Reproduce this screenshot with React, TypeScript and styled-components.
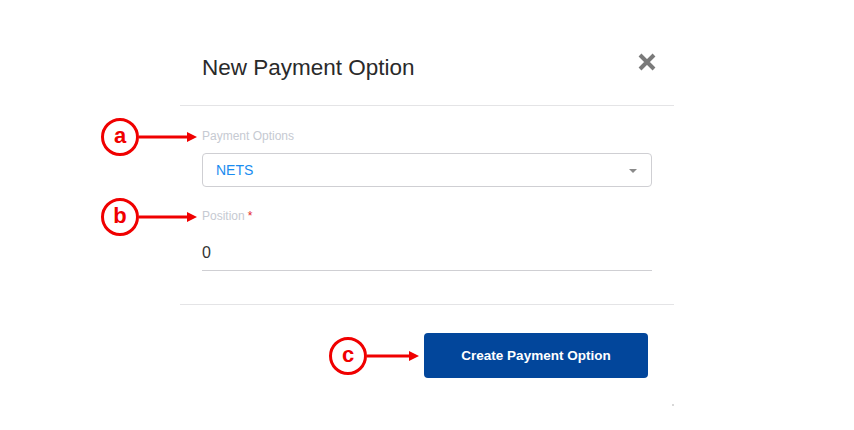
import React from 'react';
import styled, { createGlobalStyle } from 'styled-components';

const GlobalStyle = createGlobalStyle`
    html, body {
        margin: 0;
        padding: 0;
        background: #ffffff;
        font-family: "Liberation Sans", Arial, sans-serif;
    }
`;

const Page = styled.div`
    position: relative;
    width: 854px;
    height: 430px;
    overflow: hidden;
    background: #ffffff;
`;

const Modal = styled.div`
    margin: 30px 0 0 180px;
    width: 494px;
    display: flex;
    flex-direction: column;
`;

const Header = styled.div`
    height: 75px;
    display: flex;
    align-items: center;
    justify-content: space-between;
    padding: 0 15px 0 22px;
    border-bottom: 1px solid #e4e4e6;
`;

const Title = styled.h1`
    margin: 0;
    font-size: 22.5px;
    font-weight: 400;
    color: #2a2a2a;
    line-height: 30px;
`;

const Close = styled.button`
    border: none;
    background: none;
    padding: 0;
    width: 24px;
    height: 24px;
    margin-top: -12px;
    display: flex;
    align-items: center;
    justify-content: center;
    cursor: pointer;
`;

const Body = styled.div`
    padding: 22px 22px 33px;
    display: flex;
    flex-direction: column;
    border-bottom: 1px solid #e4e4e6;
`;

const Label = styled.label`
    font-size: 12px;
    line-height: 16px;
    color: #c6cad2;
`;

const Required = styled.span`
    color: #e3262b;
    margin-left: 3px;
`;

const Select = styled.div`
    margin: 9px 0 21px;
    height: 34px;
    box-sizing: border-box;
    border: 1px solid #cfcfd3;
    border-radius: 4px;
    display: flex;
    align-items: center;
    justify-content: space-between;
    padding: 0 14px 0 13px;
    font-size: 14px;
    color: #1a8cf0;
`;

const Caret = styled.span`
    width: 0;
    height: 0;
    border-left: 4px solid transparent;
    border-right: 4px solid transparent;
    border-top: 4px solid #8a8a8a;
    margin-top: 2px;
`;

const Input = styled.div`
    margin-top: 12px;
    height: 35px;
    box-sizing: border-box;
    border-bottom: 1px solid #cfcfd3;
    display: flex;
    align-items: center;
    font-size: 16px;
    color: #333333;
`;

const Footer = styled.div`
    display: flex;
    justify-content: flex-end;
    padding: 28px 26px 0 0;
`;

const PrimaryButton = styled.button`
    width: 224px;
    height: 45px;
    border: none;
    border-radius: 4px;
    background: #02469b;
    color: #ffffff;
    font-family: "Liberation Sans", Arial, sans-serif;
    font-size: 13.5px;
    font-weight: 700;
    cursor: pointer;
`;

const Marker = styled.div<{ $x: number; $y: number; $len: number }>`
    position: absolute;
    left: ${p => p.$x}px;
    top: ${p => p.$y}px;
    display: flex;
    align-items: center;
    width: ${p => 38 + p.$len}px;
    height: 38px;
`;

const Bubble = styled.div`
    flex: none;
    width: 38px;
    height: 38px;
    box-sizing: border-box;
    border: 3px solid #f00000;
    border-radius: 50%;
    display: flex;
    align-items: center;
    justify-content: center;
    color: #f00000;
    font-size: 22px;
    font-weight: 700;
    line-height: 1;
    padding-bottom: 3px;
`;

const Arrow = ({ len }: { len: number }) => (
    <svg width={len} height={12} viewBox={`0 0 ${len} 12`}>
        <line x1={0} y1={6} x2={len - 8} y2={6} stroke="#f00000" strokeWidth={3} />
        <polygon points={`${len - 10},1 ${len},6 ${len - 10},11`} fill="#f00000" />
    </svg>
);

const Annotation = ({ x, y, len, letter }: { x: number; y: number; len: number; letter: string }) => (
    <Marker $x={x} $y={y} $len={len}>
        <Bubble>{letter}</Bubble>
        <Arrow len={len} />
    </Marker>
);

const Speck = styled.div`
    position: absolute;
    left: 672px;
    top: 404px;
    width: 2px;
    height: 2px;
    background: #d8d8d8;
`;

export default function App() {
    return (
        <Page>
            <GlobalStyle />
            <Modal>
                <Header>
                    <Title>New Payment Option</Title>
                    <Close aria-label="Close">
                        <svg width="20" height="20" viewBox="0 0 20 20">
                            <path d="M3 3 L17 17 M17 3 L3 17" stroke="#7a7a7a" strokeWidth="4" strokeLinecap="butt" />
                        </svg>
                    </Close>
                </Header>
                <Body>
                    <Label>Payment Options</Label>
                    <Select>
                        <span>NETS</span>
                        <Caret />
                    </Select>
                    <Label>
                        Position<Required>*</Required>
                    </Label>
                    <Input>0</Input>
                </Body>
                <Footer>
                    <PrimaryButton>Create Payment Option</PrimaryButton>
                </Footer>
            </Modal>
            <Annotation x={101} y={118} len={58} letter="a" />
            <Annotation x={101} y={198} len={58} letter="b" />
            <Annotation x={329} y={337} len={92 - 40} letter="c" />
            <Speck />
        </Page>
    );
}
